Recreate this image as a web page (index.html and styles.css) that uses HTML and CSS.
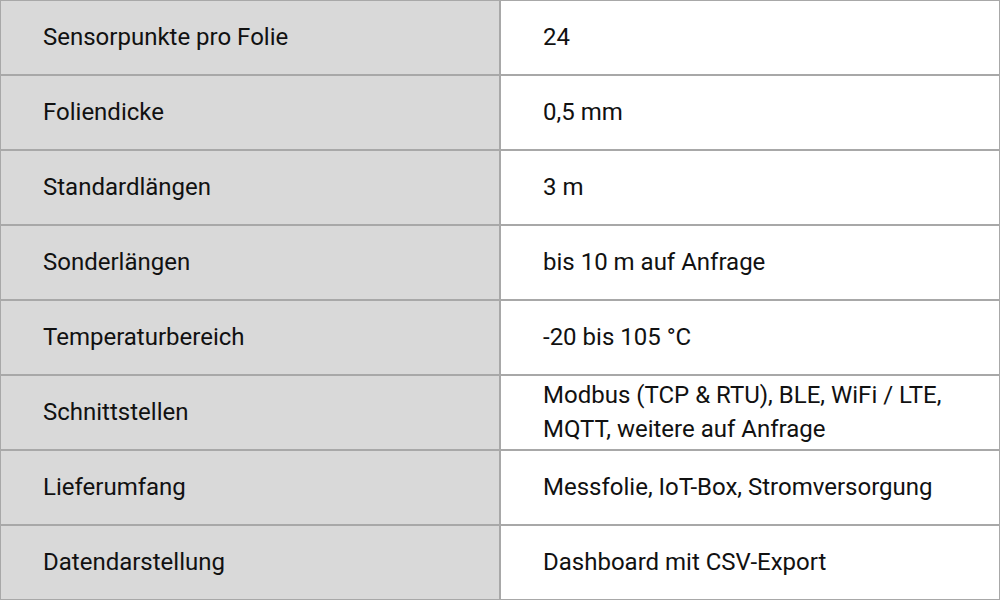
FILE: index.html
```html
<!DOCTYPE html>
<html lang="de">
<head>
<meta charset="utf-8">
<link rel="stylesheet" href="styles.css">
</head>
<body>
<div class="table">
  <div class="cell key">Sensorpunkte pro Folie</div><div class="cell val">24</div>
  <div class="cell key">Foliendicke</div><div class="cell val">0,5 mm</div>
  <div class="cell key">Standardlängen</div><div class="cell val">3 m</div>
  <div class="cell key">Sonderlängen</div><div class="cell val">bis 10 m auf Anfrage</div>
  <div class="cell key">Temperaturbereich</div><div class="cell val">-20 bis 105 °C</div>
  <div class="cell key">Schnittstellen</div><div class="cell val">Modbus (TCP &amp; RTU), BLE, WiFi / LTE, MQTT, weitere auf Anfrage</div>
  <div class="cell key">Lieferumfang</div><div class="cell val">Messfolie, IoT-Box, Stromversorgung</div>
  <div class="cell key">Datendarstellung</div><div class="cell val">Dashboard mit CSV-Export</div>
</div>
</body>
</html>
```
FILE: styles.css
```css
html, body {
  margin: 0;
  padding: 0;
  background: #ffffff;
}
.table {
  box-sizing: border-box;
  width: 1000px;
  height: 600px;
  padding: 1px;
  background: #a8a8a8;
  display: grid;
  grid-template-columns: 498px 498px;
  grid-template-rows: repeat(8, 73px);
  gap: 2px;
  font-family: Roboto, "Liberation Sans", sans-serif;
  font-size: 24px;
  line-height: 34px;
  color: #111111;
}
.cell {
  display: flex;
  align-items: center;
  padding: 0 42px;
  padding-bottom: 1px;
}
.key {
  background: #d9d9d9;
}
.val {
  background: #ffffff;
}
```
